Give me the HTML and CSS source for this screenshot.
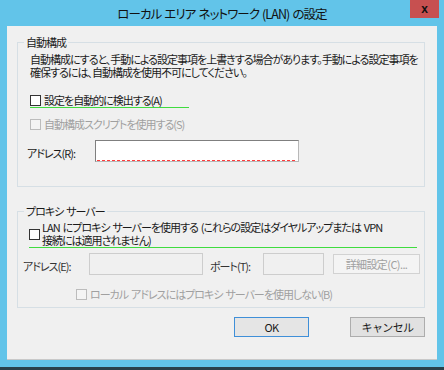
FILE: index.html
```html
<!DOCTYPE html>
<html lang="ja">
<head>
    <meta charset="UTF-8">
    <title>ローカル エリア ネットワーク (LAN) の設定</title>
    <link rel="stylesheet" href="styles.css">
</head>
<body>
    <div class="window">
        <div class="titlebar">
            <span></span>
            <h1 class="title">ローカル エリア ネットワーク (LAN) の設定</h1>
            <span class="controls"><button class="close">x</button></span>
        </div>

        <div class="client">
            <fieldset class="group auto">
                <legend>自動構成</legend>
                <p class="desc">自動構成にすると、手動による設定事項を上書きする場合があります。手動による設定事項を<br>確保するには、自動構成を使用不可にしてください。</p>
                <div class="check focus detect"><span class="box"></span>設定を自動的に検出する(A)</div>
                <div class="check disabled script"><span class="box"></span>自動構成スクリプトを使用する(S)</div>
                <div class="field-row">
                    <label>アドレス(R):</label>
                    <div class="input required"><span class="squiggle"></span></div>
                </div>
            </fieldset>

            <fieldset class="group proxy">
                <legend>プロキシ サーバー</legend>
                <div class="check focus multi"><span class="box"></span><span>LAN にプロキシ サーバーを使用する (これらの設定はダイヤルアップまたは VPN<br>接続には適用されません)</span></div>
                <div class="proxy-row">
                    <label class="addr-label">アドレス(E):</label>
                    <div class="input off addr"></div>
                    <label class="port-label">ポート(T):</label>
                    <div class="input off port"></div>
                    <button class="btn advanced" disabled>詳細設定(C)...</button>
                </div>
                <div class="check disabled bypass"><span class="box"></span>ローカル アドレスにはプロキシ サーバーを使用しない(B)</div>
            </fieldset>

            <div class="actions">
                <button class="btn default">OK</button>
                <button class="btn">キャンセル</button>
            </div>
        </div>
    </div>
</body>
</html>
```

FILE: styles.css
```css
:root {
    --frame: #62c4e9;
    --panel: #f0f0f0;
    --text: #1a1a1a;
    --muted: #a0a0a0;
    --focus: #3fdc3f;
    --group-line: #d6dfe5;
}

* {
    margin: 0;
    padding: 0;
    box-sizing: border-box;
}

body {
    background: var(--frame);
    font-family: "Noto Sans CJK JP", "Noto Sans", sans-serif;
    font-feature-settings: "palt";
    font-size: 11px;
    letter-spacing: -1px;
    word-spacing: 1.5px;
    color: var(--text);
}

.window {
    width: 444px;
    height: 370px;
    background: var(--frame);
    border-bottom: 3px solid #2a414b;
}

/* Title bar */
.titlebar {
    height: 26px;
    display: grid;
    grid-template-columns: 1fr auto 1fr;
    align-items: start;
}

.title {
    font-size: 12.5px;
    font-weight: normal;
    line-height: 14px;
    padding-top: 7px;
    color: #111;
    letter-spacing: -0.9px;
    word-spacing: 1px;
    white-space: nowrap;
}

.controls {
    display: flex;
    justify-content: flex-end;
    padding-right: 5px;
}

.close {
    width: 29px;
    height: 18px;
    border: none;
    background: #c75050;
    color: #111;
    font: bold 12px "Liberation Sans", sans-serif;
    letter-spacing: 0;
    line-height: 16px;
}

/* Client area */
.client {
    margin-left: 7px;
    width: 430px;
    height: 334px;
    background: var(--panel);
    border-bottom: 1px solid #c9c9c9;
    padding-top: 9px;
}

.group {
    margin: 0 12px 0 10px;
    border: 1px solid var(--group-line);
    min-inline-size: 0;
}

.group legend {
    margin-left: 6px;
    padding: 0 2px;
    line-height: 14px;
}

.desc {
    margin: 4px 0 0 12px;
    line-height: 13px;
    white-space: nowrap;
}

/* Checkboxes */
.check {
    display: flex;
    align-items: center;
    gap: 3px;
    line-height: 14px;
    white-space: nowrap;
}

.check .box {
    width: 11px;
    height: 11px;
    border: 1px solid #333;
    background: #fff;
    flex-shrink: 0;
}

.check.disabled {
    color: var(--muted);
}

.check.disabled .box {
    border-color: #bcbcbc;
    background: #f4f4f4;
}

.check.focus {
    border-bottom: 1px solid var(--focus);
}

.detect {
    margin: 14px 0 0 12px;
    width: 159px;
}

.script {
    margin: 9px 0 0 12px;
}

.field-row {
    display: flex;
    align-items: center;
    margin: 9px 0 24px 9px;
}

.field-row label {
    width: 68px;
    padding-top: 3px;
}

/* Text boxes */
.input {
    height: 22px;
    background: #fff;
    border: 1px solid;
    border-color: #7f7f7f #b8b8b8 #b8b8b8 #7f7f7f;
}

.input.required {
    width: 204px;
    display: flex;
    align-items: flex-end;
    padding: 0 1px;
}

.squiggle {
    flex: 1;
    height: 1px;
    background: repeating-linear-gradient(90deg, #ff3b3b 0 3px, transparent 3px 5px);
}

.input.off {
    background: var(--panel);
    border-color: #cdcdcd;
}

/* Proxy group */
.proxy {
    margin-top: 17px;
}

.multi {
    margin: 3px 0 0 11px;
    width: 388px;
    line-height: 13px;
    gap: 2px;
}

.proxy-row {
    display: flex;
    align-items: center;
    margin: 5px 0 0 5px;
}

.proxy-row label {
    color: #333;
    padding-top: 3px;
    white-space: nowrap;
}

.addr-label {
    width: 66px;
}

.addr {
    width: 114px;
}

.port-label {
    margin-left: 7px;
    width: 53px;
}

.port {
    width: 61px;
}

.bypass {
    margin: 12px 0 6px 58px;
}

/* Buttons */
.btn {
    height: 20px;
    font-family: inherit;
    font-size: 11px;
    letter-spacing: -0.6px;
    color: var(--text);
    background: #e1e1e1;
    border: 1px solid #adadad;
}

.btn.advanced {
    width: 87px;
    margin-left: 9px;
    background: #f4f4f4;
    border-color: #d2d2d2;
    color: var(--muted);
}

.actions {
    display: flex;
    justify-content: flex-end;
    gap: 41px;
    margin: 9px 12px 0 0;
}

.actions .btn {
    width: 75px;
}

.actions .btn.default {
    border-color: #3f8fd8;
    background: #e5e5e5;
}
```
